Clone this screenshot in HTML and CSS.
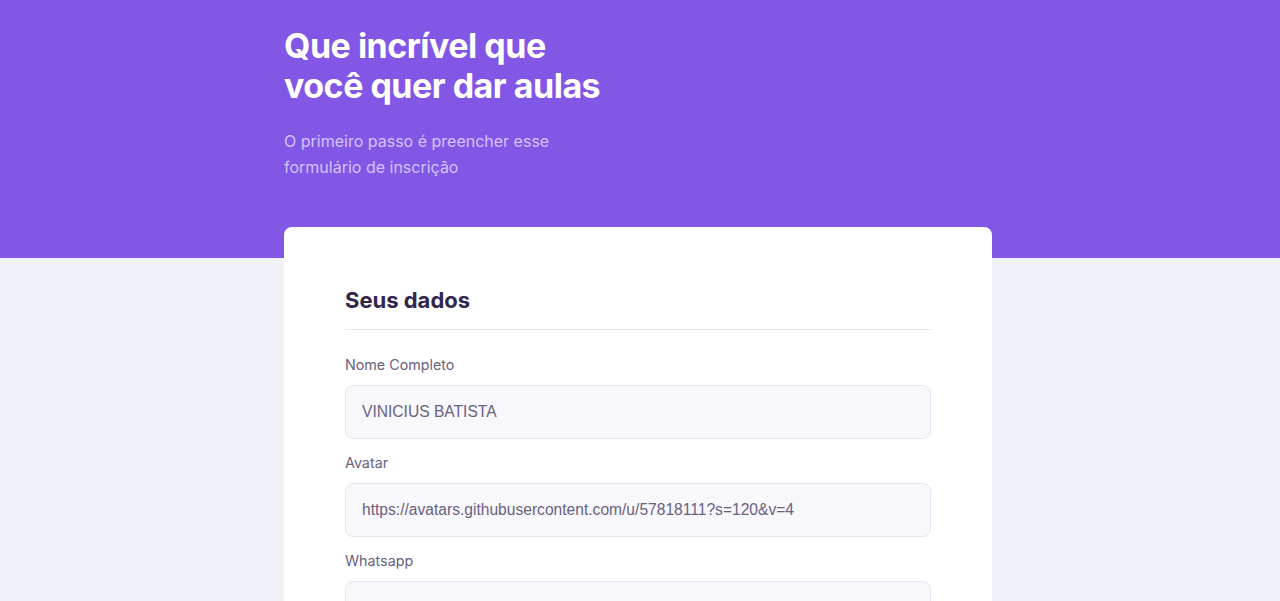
FILE: index.html
```html
<!DOCTYPE html>
<html lang="pt-BR">
<head>
<meta charset="utf-8">
<title>Dar aulas</title>
<link rel="stylesheet" href="styles.css">
</head>
<body>
<div class="page">
  <header class="page-header">
    <div class="header-content">
      <h1 class="title">Que incrível que<br>você quer dar aulas</h1>
      <p class="subtitle">O primeiro passo é preencher esse formulário de inscrição</p>
    </div>
  </header>
  <div class="main-wrap">
    <main class="card">
      <fieldset class="fieldset">
        <legend class="legend">Seus dados</legend>
        <div class="field">
          <label class="label" for="name">Nome Completo</label>
          <input class="input" id="name" type="text" value="VINICIUS BATISTA">
        </div>
        <div class="field">
          <label class="label" for="avatar">Avatar</label>
          <input class="input" id="avatar" type="text" value="https://avatars.githubusercontent.com/u/57818111?s=120&amp;v=4">
        </div>
        <div class="field">
          <label class="label" for="whatsapp">Whatsapp</label>
          <input class="input" id="whatsapp" type="text" value="">
        </div>
      </fieldset>
    </main>
  </div>
</div>
</body>
</html>
```
FILE: styles.css
```css
* { box-sizing: border-box; }
html, body { margin: 0; padding: 0; }
body {
  background: #f0f0f7;
  font-family: "Inter", "Liberation Sans", sans-serif;
  overflow: hidden;
}
.page-header {
  background: #8257e5;
  height: 258px;
  padding-right: 4px;
}
.header-content {
  width: 708px;
  margin: 0 auto;
  padding-top: 26px;
}
.title {
  margin: 0;
  font-family: "Inter", "Liberation Sans", sans-serif;
  font-weight: 700;
  font-size: 34px;
  line-height: 40px;
  color: #ffffff;
  letter-spacing: -0.5px;
}
.subtitle {
  margin: 22px 0 0;
  max-width: 290px;
  font-size: 16px;
  line-height: 26px;
  color: #d4c2ff;
}
.main-wrap {
  padding-right: 4px;
}
.card {
  width: 708px;
  margin: -31px auto 0;
  background: #ffffff;
  border-radius: 8px 8px 0 0;
  padding: 57px 61px 40px;
  min-height: 400px;
}
.fieldset {
  border: 0;
  margin: 0;
  padding: 0;
  min-width: 0;
}
.legend {
  display: block;
  width: 100%;
  padding: 0 0 13px;
  font-family: "Inter", "Liberation Sans", sans-serif;
  font-weight: 700;
  font-size: 22px;
  line-height: 32px;
  color: #32264d;
  border-bottom: 1px solid #e6e6f0;
  margin-bottom: 25px;
}
.field {
  display: flex;
  flex-direction: column;
  margin-bottom: 14px;
}
.label {
  font-size: 14.3px;
  line-height: 20px;
  color: #6a6180;
  margin-bottom: 10px;
}
.input {
  height: 54px;
  width: 100%;
  background: #f8f8fc;
  border: 1px solid #e6e6f0;
  border-radius: 8px;
  padding: 0 16px;
  font-family: "Liberation Sans", Arial, sans-serif;
  font-size: 15.6px;
  color: #6a6180;
  outline: none;
}
```
